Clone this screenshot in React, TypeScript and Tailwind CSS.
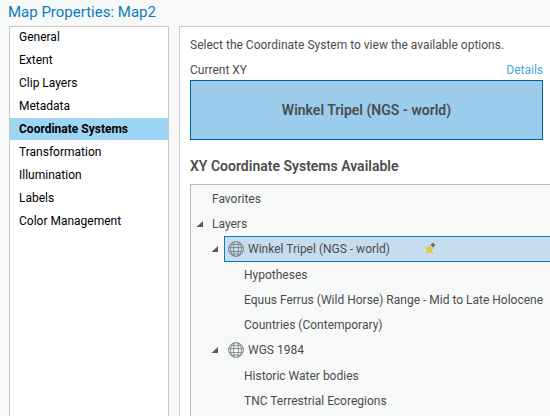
const sections = [
  "General",
  "Extent",
  "Clip Layers",
  "Metadata",
  "Coordinate Systems",
  "Transformation",
  "Illumination",
  "Labels",
  "Color Management",
];

const groups = [
  {
    name: "Winkel Tripel (NGS - world)",
    selected: true,
    layers: [
      "Hypotheses",
      "Equus Ferrus (Wild Horse) Range - Mid to Late Holocene",
      "Countries (Contemporary)",
    ],
  },
  {
    name: "WGS 1984",
    selected: false,
    layers: ["Historic Water bodies", "TNC Terrestrial Ecoregions"],
  },
];

function Expander({ label }: { label: string }) {
  return (
    <button type="button" aria-label={`Collapse ${label}`} className="flex size-4 shrink-0 items-center justify-center">
      <svg width="8" height="8" viewBox="0 0 8 8" aria-hidden="true">
        <path d="M7 1V7H.5Z" fill="#595959" />
      </svg>
    </button>
  );
}

function Globe() {
  return (
    <svg width="16" height="16" viewBox="0 0 16 16" fill="none" stroke="#7f8588" className="shrink-0" aria-hidden="true">
      <circle cx="8" cy="8" r="7.4" />
      <path d="M.8 6.5H15.2M1.4 10.5H14.6M3 3.2Q8 4.2 13 3.2M3.2 13.2Q8 12.6 12.8 13.2" strokeWidth=".9" />
      <path d="M6.5 .8C5.2 4 5.2 12 6.5 15.2M9.5 .8C10.8 4 10.8 12 9.5 15.2" strokeWidth=".9" />
      <path d="M5.5 1C1.6 4.5 1.6 11.5 5.5 15M10.5 1C14.4 4.5 14.4 11.5 10.5 15" strokeWidth=".9" />
    </svg>
  );
}

function FavoriteStar() {
  return (
    <svg width="12" height="12" viewBox="0 0 12 12" aria-hidden="true" className="block">
      <path d="M5.5 .8L6.9 4.4H10.8L7.8 7L9 11.3L5.5 8.9L2 11.3L3.2 7L.2 4.4H4.1Z" fill="#dcc84c" />
      <path d="M8 0H10V1H11V3H10V4H8V3H7V1H8Z" fill="#70767c" />
    </svg>
  );
}

export default function App() {
  return (
    <main className="flex h-screen flex-col overflow-hidden bg-[#f7f9f8] font-['Roboto','Open_Sans',sans-serif] text-xs text-[#4c4c4c]">
      <h1 className="h-[26px] shrink-0 px-2 text-[15px] leading-6 text-[#0a7cc1]">Map Properties: Map2</h1>
      <div className="flex min-h-0 flex-1 pl-[9px]">
        <nav className="w-40 shrink-0 border-x border-t border-[#c8c8c8] bg-white text-black">
          <ul className="-mt-px flex flex-col gap-px">
            {sections.map((name) => (
              <li key={name}>
                <button
                  type="button"
                  className={
                    name === "Coordinate Systems"
                      ? "block h-[22px] w-full bg-[#9fd5f4] px-[9px] text-left font-bold"
                      : "block h-[22px] w-full px-[9px] text-left"
                  }
                >
                  {name}
                </button>
              </li>
            ))}
          </ul>
        </nav>
        <section className="ml-2.5 flex min-w-0 flex-1 flex-col border-t border-l border-[#c8c8c8] bg-white pl-2.5">
          <p className="mt-2.5 leading-4">Select the Coordinate System to view the available options.</p>
          <div className="mt-[9px] mr-[7px] flex justify-between leading-4">
            <span id="current-xy">Current XY</span>
            <a href="#details" className="text-[#46a4dc]">Details</a>
          </div>
          <button
            type="button"
            aria-describedby="current-xy"
            className="mt-0.5 mr-[7px] h-[60px] shrink-0 border border-[#0060a0] bg-[#9bccec] text-sm font-semibold"
          >
            Winkel Tripel (NGS - world)
          </button>
          <h2 className="mt-4 text-sm leading-5 font-semibold">XY Coordinate Systems Available</h2>
          <ul className="mt-2 flex-1 border-t border-l border-[#b9bdbb] bg-[#f7f9f8] pt-px whitespace-nowrap">
            <li className="flex h-[25px] items-center pl-[21px]">Favorites</li>
            <li>
              <div className="flex h-[25px] items-center gap-1 pl-px">
                <Expander label="Layers" />
                Layers
              </div>
              <ul>
                {groups.map((group) => (
                  <li key={group.name}>
                    <div className="flex h-[26px] items-center gap-px pl-4">
                      <Expander label={group.name} />
                      <div
                        className={
                          group.selected
                            ? "flex h-full flex-1 items-center gap-1 border-y border-l border-[#0a7cc1] bg-[#c6dcef] pl-[3px]"
                            : "flex h-full flex-1 items-center gap-1 pl-1"
                        }
                      >
                        <Globe />
                        <span className="w-[172px]">{group.name}</span>
                        {group.selected && (
                          <button type="button" aria-label="Add to favorites">
                            <FavoriteStar />
                          </button>
                        )}
                      </div>
                    </div>
                    <ul>
                      {group.layers.map((layer) => (
                        <li key={layer} className="flex h-[25px] items-center pl-[53px]">{layer}</li>
                      ))}
                    </ul>
                  </li>
                ))}
              </ul>
            </li>
          </ul>
        </section>
      </div>
    </main>
  );
}
